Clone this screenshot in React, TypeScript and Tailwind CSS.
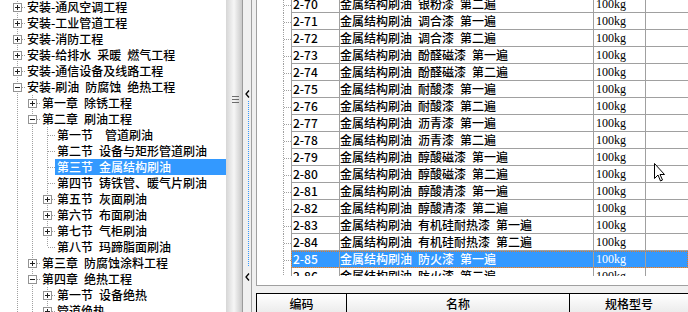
import React from 'react';

type TreeNode = { text: string; level: number; box?: '+' | '-' };

const tree: TreeNode[] = [
  { text: '安装-通风空调工程', level: 0, box: '+' },
  { text: '安装-工业管道工程', level: 0, box: '+' },
  { text: '安装-消防工程', level: 0, box: '+' },
  { text: '安装-给排水 采暖 燃气工程', level: 0, box: '+' },
  { text: '安装-通信设备及线路工程', level: 0, box: '+' },
  { text: '安装-刷油 防腐蚀 绝热工程', level: 0, box: '-' },
  { text: '第一章 除锈工程', level: 1, box: '+' },
  { text: '第二章 刷油工程', level: 1, box: '-' },
  { text: '第一节  管道刷油', level: 2 },
  { text: '第二节 设备与矩形管道刷油', level: 2 },
  { text: '第三节 金属结构刷油', level: 2 },
  { text: '第四节 铸铁管、暖气片刷油', level: 2 },
  { text: '第五节 灰面刷油', level: 2, box: '+' },
  { text: '第六节 布面刷油', level: 2, box: '+' },
  { text: '第七节 气柜刷油', level: 2, box: '+' },
  { text: '第八节 玛蹄脂面刷油', level: 2 },
  { text: '第三章 防腐蚀涂料工程', level: 1, box: '+' },
  { text: '第四章 绝热工程', level: 1, box: '-' },
  { text: '第一节 设备绝热', level: 2, box: '+' },
  { text: '管道绝热', level: 2, box: '+' },
];

const rows: [string, string][] = [
  ['2-70', '金属结构刷油 银粉漆 第二遍'],
  ['2-71', '金属结构刷油 调合漆 第一遍'],
  ['2-72', '金属结构刷油 调合漆 第二遍'],
  ['2-73', '金属结构刷油 酚醛磁漆 第一遍'],
  ['2-74', '金属结构刷油 酚醛磁漆 第二遍'],
  ['2-75', '金属结构刷油 耐酸漆 第一遍'],
  ['2-76', '金属结构刷油 耐酸漆 第二遍'],
  ['2-77', '金属结构刷油 沥青漆 第一遍'],
  ['2-78', '金属结构刷油 沥青漆 第二遍'],
  ['2-79', '金属结构刷油 醇酸磁漆 第一遍'],
  ['2-80', '金属结构刷油 醇酸磁漆 第二遍'],
  ['2-81', '金属结构刷油 醇酸清漆 第一遍'],
  ['2-82', '金属结构刷油 醇酸清漆 第二遍'],
  ['2-83', '金属结构刷油 有机硅耐热漆 第一遍'],
  ['2-84', '金属结构刷油 有机硅耐热漆 第二遍'],
  ['2-85', '金属结构刷油 防火漆 第一遍'],
  ['2-86', '金属结构刷油 防火漆 第二遍'],
];

const SELECTED_NODE = 10;
const SELECTED_ROW = 15;

// true if the node at `level` owning row i still has a sibling further down
function continues(i: number, level: number) {
  for (let j = i + 1; j < tree.length; j++) {
    if (tree[j].level < level) return false;
    if (tree[j].level === level) return true;
  }
  return true;
}

// SimSun-like spacing: every blank is a 6px gap
function Txt({ text }: { text: string }) {
  const parts = text.split(' ');
  return (
    <span className="inline-flex whitespace-nowrap">
      {parts.map((p, k) => (
        <React.Fragment key={k}>
          {k > 0 && <span className="inline-block w-[6px]" />}
          {p}
        </React.Fragment>
      ))}
    </span>
  );
}

function Guide({ full }: { full: boolean }) {
  return (
    <svg width="15" height="16" className="shrink-0">
      {full && <line x1="7.5" y1="0" x2="7.5" y2="16" stroke="#a0a0a0" strokeDasharray="1 1" />}
    </svg>
  );
}

function Connector({ down, box }: { down: boolean; box?: '+' | '-' }) {
  return (
    <svg width="15" height="16" className="shrink-0">
      <line x1="7.5" y1="0" x2="7.5" y2={down ? 16 : 8} stroke="#a0a0a0" strokeDasharray="1 1" />
      <line x1="8" y1="8.5" x2="15" y2="8.5" stroke="#a0a0a0" strokeDasharray="1 1" />
      {box && (
        <g>
          <rect x="3.5" y="4.5" width="8" height="8" fill="#fff" stroke="#939393" />
          <line x1="5" y1="8.5" x2="10" y2="8.5" stroke="#202020" />
          {box === '+' && <line x1="7.5" y1="6" x2="7.5" y2="11" stroke="#202020" />}
        </g>
      )}
    </svg>
  );
}

function TreeRow({ node, i }: { node: TreeNode; i: number }) {
  const sel = i === SELECTED_NODE;
  return (
    <div className="flex h-[16px] pl-[10px]">
      {Array.from({ length: node.level }).map((_, a) => (
        <Guide key={a} full={continues(i, a)} />
      ))}
      <Connector down={continues(i, node.level)} box={node.box} />
      <div className={sel ? 'flex-1 bg-[#3399ff] pl-[2px] text-white' : 'pl-[2px]'}>
        <Txt text={node.text} />
      </div>
    </div>
  );
}

function GridRow({ code, name, i }: { code: string; name: string; i: number }) {
  const sel = i === SELECTED_ROW;
  const last = i === rows.length - 1;
  const cell = 'h-[17px] border-l border-b border-[#a0a0a0] leading-[16px]';
  return (
    <div className="flex h-[17px]">
      <div className={`w-[34px] shrink-0 ${last ? 'border-b border-[#a0a0a0]' : ''}`}>
        <svg width="34" height="17">
          <line x1="26.5" y1="0" x2="26.5" y2={last ? 9 : 17} stroke="#a0a0a0" strokeDasharray="1 1" />
          <line x1="27" y1="9.5" x2="34" y2="9.5" stroke="#a0a0a0" strokeDasharray="1 1" />
        </svg>
      </div>
      <div
        className={`flex flex-1 ${
          sel ? 'bg-[#3399ff] text-white outline-1 outline-dotted outline-[#d9782d] -outline-offset-1' : ''
        }`}
      >
        <div className={`${cell} w-[48px] shrink-0 pl-[1px]`}>{code}</div>
        <div className={`${cell} w-[254px] shrink-0`}>
          <Txt text={name} />
        </div>
        <div className={`${cell} w-[52px] shrink-0 pl-[2px] font-['Liberation_Serif',serif]`}>100kg</div>
        <div className={`${cell} flex-1`} />
      </div>
    </div>
  );
}

function Chevron() {
  return (
    <svg width="5" height="8" className="ml-[2px]">
      <path d="M4 0.5 L1 4 L4 7.5" fill="none" stroke="#000" strokeWidth="1.3" />
    </svg>
  );
}

export default function App() {
  return (
    <div className="relative flex h-[312px] w-[688px] overflow-hidden bg-white font-['Noto_Sans_CJK_SC',sans-serif] text-[12px] font-medium leading-[16px] text-black">
      {/* tree */}
      <div className="h-full w-[226px] shrink-0 overflow-hidden">
        <div className="-mt-px">
          {tree.map((n, i) => (
            <TreeRow key={i} node={n} i={i} />
          ))}
        </div>
      </div>

      {/* tree scrollbar */}
      <div className="h-full w-[17px] shrink-0 border-r border-[#9b9b9b] bg-linear-to-r from-[#d6d6d6] via-[#f6f6f6] to-[#c9c9c9] pl-[6px] pt-[96px]">
        <div className="flex w-[7px] flex-col gap-[2px]">
          <div className="h-px bg-[#6d6d6d]" />
          <div className="h-px bg-[#6d6d6d]" />
          <div className="h-px bg-[#6d6d6d]" />
        </div>
      </div>

      {/* splitter */}
      <div className="flex h-full w-[13px] shrink-0 bg-[#f0f0f0]">
        <div className="flex w-[9px] flex-col border-r border-[#a0a0a0] pt-[90px]">
          <Chevron />
          <div className="ml-[5px] mt-[3px] h-[165px] border-l border-dotted border-[#3399ff]" />
          <div className="mt-[7px]">
            <Chevron />
          </div>
        </div>
      </div>

      {/* grid */}
      <div className="flex w-[432px] shrink-0 flex-col">
        <div className="h-[285px] overflow-hidden border-l border-[#a0a0a0]">
          <div className="-mt-[4px]">
            {rows.map(([c, n], i) => (
              <GridRow key={c} code={c} name={n} i={i} />
            ))}
          </div>
        </div>
        <div className="h-[10px] border-b border-l border-[#a0a0a0] bg-white" />
        <div className="h-[7px] bg-[#f0f0f0]" />
        <div className="flex flex-1 border-l border-t border-black bg-linear-to-b from-white to-[#ececec]">
          <div className="w-[90px] shrink-0 border-r border-black pt-[2px] text-center">编码</div>
          <div className="w-[223px] shrink-0 border-r border-black pt-[2px] text-center">名称</div>
          <div className="flex-1 pt-[2px] text-center">规格型号</div>
        </div>
      </div>

      {/* mouse pointer */}
      <svg width="13" height="20" className="absolute left-[654px] top-[163px]">
        <path
          d="M0.5 0.5 L0.5 15.5 L4 12 L6.5 18 L8.5 17 L6 11.5 L10.5 11.5 Z"
          fill="#fff"
          stroke="#000"
          strokeLinejoin="round"
        />
      </svg>
    </div>
  );
}
